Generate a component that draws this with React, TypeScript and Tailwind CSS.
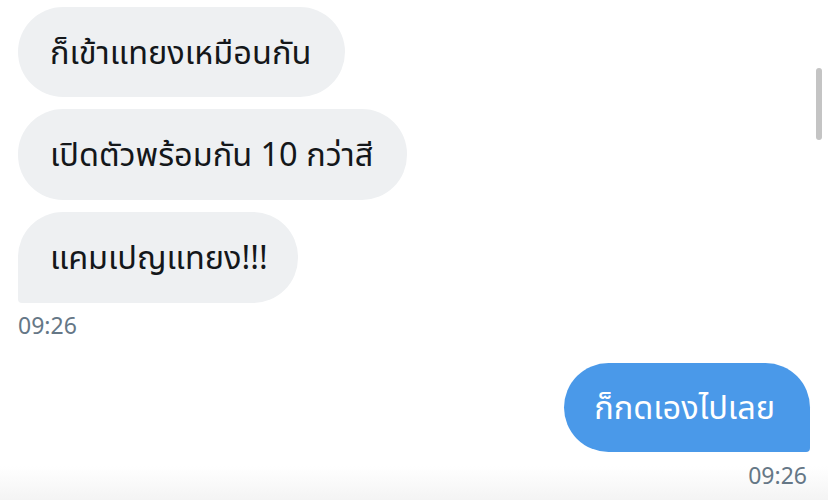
import React from "react";

const font = { fontFamily: '"Noto Sans", "Noto Sans Thai", "Liberation Sans", sans-serif' };

export default function App() {
  return (
    <div className="relative w-[828px] h-[500px] overflow-hidden bg-white" style={font}>
      <div className="absolute left-0 right-0 bottom-0 h-[34px] bg-gradient-to-b from-white to-[#f4f4f4]" />
      <div className="relative flex flex-col pl-[18px] pr-[18px] pt-[7px]">
        <div className="flex flex-col items-start gap-[12px]">
          <div className="h-[90px] flex items-center pl-[32px] pr-[34px] rounded-[45px] bg-[#eef0f2] text-[32.5px] text-[#14171a]">
            ก็เข้าแทยงเหมือนกัน
          </div>
          <div className="h-[91px] flex items-center pl-[32px] pr-[34px] rounded-[45px] bg-[#eef0f2] text-[32.5px] text-[#14171a]">
            เปิดตัวพร้อมกัน 10 กว่าสี
          </div>
          <div className="h-[91px] flex items-center pl-[32px] pr-[30px] rounded-[45px] rounded-bl-[4px] bg-[#eef0f2] text-[32.5px] text-[#14171a]">
            แคมเปญแทยง!!!
          </div>
        </div>
        <div className="mt-[8px] text-[23px] leading-[28px] text-[#657786]">09:26</div>
        <div className="mt-[24px] flex justify-end">
          <div className="h-[89px] flex items-center pl-[30px] pr-[35px] rounded-[45px] rounded-br-[4px] bg-[#4a99e9] text-[32.5px] text-white">
            ก็กดเองไปเลย
          </div>
        </div>
        <div className="mt-[9px] flex justify-end pr-[3px] text-[23px] leading-[28px] text-[#657786]">09:26</div>
      </div>
      <div className="absolute right-[6px] top-[68px] w-[6px] h-[72px] rounded-full bg-[#c4c4c4]" />
    </div>
  );
}
